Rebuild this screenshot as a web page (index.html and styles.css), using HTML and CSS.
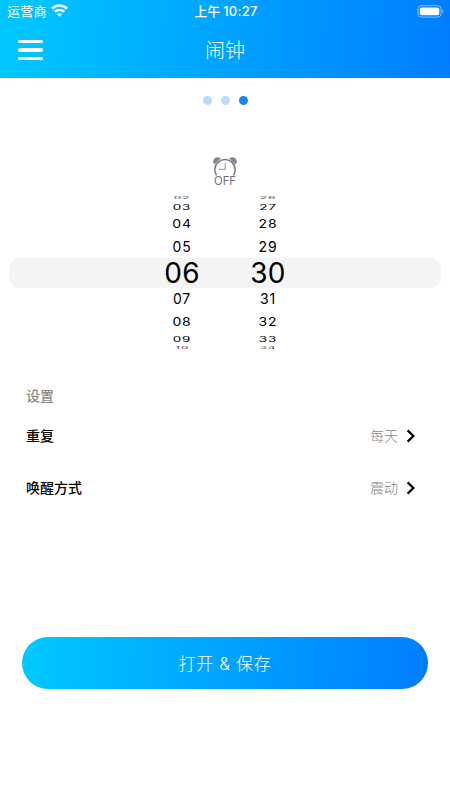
FILE: index.html
```html
<!DOCTYPE html>
<html lang="zh-CN">
<head>
<meta charset="utf-8">
<title>闹钟</title>
<link rel="stylesheet" href="styles.css">
</head>
<body>
<header class="header">
  <div class="status">
    <div class="carrier"><span>运营商</span>
      <svg class="wifi" width="17" height="13" viewBox="0 0 17 13" fill="none" stroke="#fff" stroke-width="2.6"><path d="M1 4.6C5.2.4 11.8.4 16 4.6M3.8 7.8c2.7-2.5 6.7-2.5 9.4 0"/><path d="M5.9 10.1c1.5-1.3 3.7-1.3 5.2 0L8.5 12.7z" fill="#fff" stroke="none"/></svg>
    </div>
    <div class="time"><span class="ampm">上午</span><span>10:27</span></div>
    <svg class="battery" width="28" height="13" viewBox="0 0 28 13"><rect x="1" y=".7" width="23" height="11.4" rx="3.2" fill="none" stroke="#fff" stroke-opacity=".5"/><rect x="2.8" y="2.4" width="19.5" height="7.9" rx="1.8" fill="#fff"/><path d="M25.4 4.3c1.3.6 1.3 3.5 0 4.1z" fill="#fff" fill-opacity=".55"/></svg>
  </div>
  <div class="navbar">
    <div class="menu"><i></i><i></i><i></i></div>
    <h1>闹钟</h1>
  </div>
</header>
<main>
  <div class="dots"><i></i><i></i><i class="active"></i></div>
  <div class="alarm">
    <svg width="26" height="20" viewBox="0 0 26 20" fill="none"><path d="M2.4 7.4C-1.4 3.4 4.2-2.2 8.8 1.4zM23.6 7.4C27.4 3.4 21.8-2.2 17.2 1.4z" fill="#81868f"/><path d="M4.5 18.4a10.2 10.2 0 1 1 17 0" stroke="#737983" stroke-width="1.5"/><path d="M13.2 5.5v6.8H7" stroke="#a5a8ad" stroke-width="1.2"/></svg>
    <span>OFF</span>
  </div>
  <div class="picker">
    <div class="wheel">
      <div class="row a"><span>02</span></div><div class="row b"><span>03</span></div><div class="row c"><span>04</span></div><div class="row d"><span>05</span></div><div class="row now"><span>06</span></div><div class="row e"><span>07</span></div><div class="row f"><span>08</span></div><div class="row g"><span>09</span></div><div class="row h"><span>10</span></div>
    </div>
    <div class="wheel">
      <div class="row a"><span>26</span></div><div class="row b"><span>27</span></div><div class="row c"><span>28</span></div><div class="row d"><span>29</span></div><div class="row now"><span>30</span></div><div class="row e"><span>31</span></div><div class="row f"><span>32</span></div><div class="row g"><span>33</span></div><div class="row h"><span>34</span></div>
    </div>
  </div>
  <section class="settings">
    <h2>设置</h2>
    <div class="item"><b>重复</b><span>每天</span><svg width="10" height="14" viewBox="0 0 10 14"><path d="M1.6 1.4 7.4 7l-5.8 5.6" fill="none" stroke="#000" stroke-width="2.2"/></svg></div>
    <div class="item"><b>唤醒方式</b><span>震动</span><svg width="10" height="14" viewBox="0 0 10 14"><path d="M1.6 1.4 7.4 7l-5.8 5.6" fill="none" stroke="#000" stroke-width="2.2"/></svg></div>
  </section>
  <button class="save">打开 &amp; 保存</button>
</main>
</body>
</html>
```
FILE: styles.css
```css
* { box-sizing: border-box; }
body { margin: 0; width: 450px; height: 800px; overflow: hidden; background: #fff; font-family: Inter, "Noto Sans CJK SC", sans-serif; color: #000; }
svg { display: block; }
.header { height: 78px; background: linear-gradient(94deg, #00c9ff, #007dff); color: #fff; }
.status { height: 22px; display: grid; grid-template-columns: 1fr auto 1fr; align-items: center; padding: 0 5px 0 7px; font-size: 13px; line-height: 22px; }
.carrier { display: flex; align-items: center; gap: 4px; }
.carrier span { letter-spacing: .3px; }
.wifi { margin-top: -1px; }
.time { display: flex; gap: 3px; font-weight: 500; }
.time span { letter-spacing: .3px; }
.time .ampm { letter-spacing: 0; }
.battery { justify-self: end; }
.navbar { height: 56px; display: grid; grid-template-columns: 1fr auto 1fr; align-items: center; padding: 0 18px; }
.menu { display: flex; flex-direction: column; gap: 5px; }
.menu i { width: 25px; height: 3.3px; border-radius: 2px; background: #fff; }
h1 { margin: 2px 0 0; font-size: 20px; line-height: 30px; font-weight: 300; }
.dots { height: 44px; display: flex; justify-content: center; align-items: center; gap: 9px; }
.dots i { width: 9px; height: 9px; border-radius: 50%; background: #badbfc; }
.dots .active { background: #1a86f2; }
.alarm { margin-top: 35px; height: 39px; display: flex; flex-direction: column; align-items: center; color: #6d737e; font-size: 11.3px; line-height: 12px; }
.alarm span { margin-top: -2px; }
.picker { position: relative; margin: 0 9px; height: 154px; display: flex; justify-content: center; gap: 16px; }
.picker::before { content: ""; position: absolute; z-index: -1; left: 0; right: 0; top: 62px; height: 30px; border-radius: 11px; background: #f4f4f4; }
.wheel { width: 70px; display: flex; flex-direction: column; }
.row { flex: none; display: flex; align-items: center; justify-content: center; font-size: 14px; line-height: 20px; letter-spacing: .8px; }
.row span { flex: none; margin: -10px 0; }
.a { height: 6px; padding-bottom: 3px; }
.b { height: 10px; }
.c { height: 23px; }
.d { height: 23px; }
.now { height: 30px; font-size: 28px; letter-spacing: .3px; }
.e { height: 22px; }
.f { height: 24px; }
.g { height: 9px; }
.h { height: 9px; }
.a span, .h span { transform: scaleY(.25); font-size: 12px; opacity: .75; }
.b span, .g span { transform: scaleY(.54); font-size: 13.5px; }
.c span, .f span { transform: scaleY(.82); }
.settings { margin: 34px 34px 0 26px; }
h2 { margin: 0; height: 26px; font-size: 14px; line-height: 24px; font-weight: 500; color: #8b8b8b; }
.item { height: 52px; display: flex; align-items: center; font-size: 14px; line-height: 20px; }
.item b { flex: 1; font-weight: 500; }
.item span { font-weight: 300; color: #858585; margin-right: 8px; }
.save { display: block; margin: 123px 22px 0; width: 406px; height: 52px; border: 0; border-radius: 26px; background: linear-gradient(94deg, #00c9ff, #007dff); color: #fff; font: 300 17px/50px Inter, "Noto Sans CJK SC", sans-serif; letter-spacing: .7px; padding: 2px 0 0; }
```
